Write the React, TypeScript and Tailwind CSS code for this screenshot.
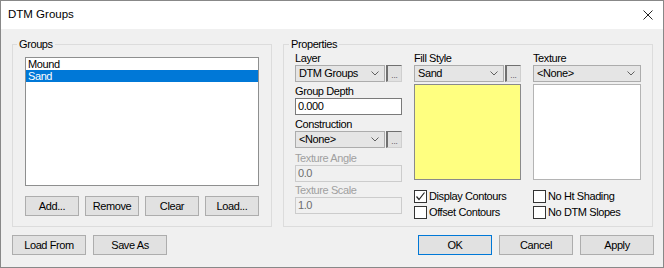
import React from "react"

const Chevron = () => (
  <svg width="8" height="5" viewBox="0 0 8 5" className="shrink-0">
    <polyline points="0.5,0.5 4,4 7.5,0.5" fill="none" stroke="#606060" strokeWidth="1" />
  </svg>
)

function Btn({ label, className = "", primary = false }: { label: string; className?: string; primary?: boolean }) {
  return (
    <div
      className={`h-[20px] flex items-center justify-center bg-[#e1e1e1] border ${
        primary ? "border-[#0078d7]" : "border-[#adadad]"
      } text-[11px] tracking-[-0.4px] text-black ${className}`}
    >
      {label}
    </div>
  )
}

function Combo({ value, className = "" }: { value: string; className?: string }) {
  return (
    <div
      className={`h-[17px] flex items-center justify-between bg-[#e5e5e5] border border-[#acacac] pl-[3px] pr-[5px] text-[11px] tracking-[-0.4px] text-black ${className}`}
    >
      <span className="leading-none">{value}</span>
      <Chevron />
    </div>
  )
}

const Dots = () => (
  <div className="ml-[1px] w-[16px] h-[17px] flex items-end justify-center bg-[#e1e1e1] border-l-2 border-t border-l-[#707070] border-t-[#707070] border-r border-b border-r-[#cfcfcf] border-b-[#cfcfcf]">
    <span className="text-[8px] leading-[10px] text-[#333]">...</span>
  </div>
)

function Label({ text, disabled = false }: { text: string; disabled?: boolean }) {
  return (
    <div className={`h-[13px] leading-[13px] text-[11px] tracking-[-0.4px] ${disabled ? "text-[#a0a0a0]" : "text-black"}`}>
      {text}
    </div>
  )
}

function Check({ label, checked = false }: { label: string; checked?: boolean }) {
  return (
    <div className="flex items-center h-[13px]">
      <div className="w-[13px] h-[13px] bg-white border border-[#333] flex items-center justify-center shrink-0">
        {checked && (
          <svg width="11" height="11" viewBox="0 0 11 11">
            <polyline points="1.5,5.5 4,8.5 9.5,1.5" fill="none" stroke="#222" strokeWidth="1.2" />
          </svg>
        )}
      </div>
      <span className="ml-[2px] text-[11px] tracking-[-0.4px] leading-[13px] text-black whitespace-nowrap">{label}</span>
    </div>
  )
}

export default function App() {
  const groups = ["Mound", "Sand"]
  const selected = "Sand"

  return (
    <div className="w-[664px] h-[268px] border border-[#888] bg-[#f0f0f0] flex flex-col font-['Liberation_Sans',Arial,sans-serif] overflow-hidden">
      {/* title bar */}
      <div className="h-[28px] shrink-0 bg-white flex items-center justify-between pl-[7px] pr-[10px]">
        <span className="text-[11.5px] text-black">DTM Groups</span>
        <svg width="10" height="10" viewBox="0 0 10 10">
          <path d="M0.5 0.5 L9.5 9.5 M9.5 0.5 L0.5 9.5" stroke="#222" strokeWidth="1" />
        </svg>
      </div>

      <div className="flex-1 flex flex-col pt-[9px] pl-[11px] pr-[9px]">
        <div className="flex gap-[11px]">
          {/* Groups */}
          <fieldset className="w-[260px] h-[189px] border border-[#dcdcdc] p-0 m-0">
            <legend className="ml-[4px] px-[2px] h-[13px] leading-[13px] text-[11px] tracking-[-0.4px] text-black">Groups</legend>
            <div className="pl-[12px] pt-[6px]">
              <div className="w-[234px] h-[129px] bg-white border border-[#8e8f8f] flex flex-col">
                {groups.map((g) => (
                  <div
                    key={g}
                    className={`h-[12px] leading-[12px] pl-[2px] text-[11px] tracking-[-0.4px] ${
                      g === selected ? "bg-[#0078d7] text-white" : "text-black"
                    }`}
                  >
                    {g}
                  </div>
                ))}
              </div>
              <div className="mt-[10px] flex gap-[6px]">
                <Btn label="Add..." className="w-[54px]" />
                <Btn label="Remove" className="w-[54px]" />
                <Btn label="Clear" className="w-[54px]" />
                <Btn label="Load..." className="w-[54px]" />
              </div>
            </div>
          </fieldset>

          {/* Properties */}
          <fieldset className="w-[370px] h-[189px] border border-[#dcdcdc] p-0 m-0">
            <legend className="ml-[5px] px-[2px] h-[13px] leading-[13px] text-[11px] tracking-[-0.4px] text-black">Properties</legend>
            <div className="pl-[11px] pt-[1px] flex gap-[12px] items-start">
              <div className="w-[107px] flex flex-col">
                <Label text="Layer" />
                <div className="flex">
                  <Combo value="DTM Groups" className="w-[90px]" />
                  <Dots />
                </div>
                <div className="mt-[3px]">
                  <Label text="Group Depth" />
                </div>
                <div className="h-[17px] bg-white border border-[#7a7a7a] pl-[2px] flex items-center text-[11px] tracking-[-0.4px] text-black">
                  0.000
                </div>
                <div className="mt-[3px]">
                  <Label text="Construction" />
                </div>
                <div className="flex">
                  <Combo value="<None>" className="w-[90px]" />
                  <Dots />
                </div>
                <div className="mt-[4px]">
                  <Label text="Texture Angle" disabled />
                </div>
                <div className="h-[17px] bg-[#f0f0f0] border border-[#cccccc] pl-[2px] flex items-center text-[11px] tracking-[-0.4px] text-[#6d6d6d]">
                  0.0
                </div>
                <div className="mt-[2px]">
                  <Label text="Texture Scale" disabled />
                </div>
                <div className="h-[17px] bg-[#f0f0f0] border border-[#cccccc] pl-[2px] flex items-center text-[11px] tracking-[-0.4px] text-[#6d6d6d]">
                  1.0
                </div>
              </div>

              <div className="w-[107px] flex flex-col">
                <Label text="Fill Style" />
                <div className="flex">
                  <Combo value="Sand" className="w-[90px]" />
                  <Dots />
                </div>
                <div className="mt-[2px] h-[96px] bg-[#ffff80] border border-[#8a8a8a]" />
                <div className="mt-[10px] flex flex-col gap-[3px]">
                  <Check label="Display Contours" checked />
                  <Check label="Offset Contours" />
                </div>
              </div>

              <div className="w-[108px] flex flex-col">
                <Label text="Texture" />
                <Combo value="<None>" className="w-[108px]" />
                <div className="mt-[2px] h-[96px] bg-white border border-[#b4b4b4]" />
                <div className="mt-[10px] flex flex-col gap-[3px]">
                  <Check label="No Ht Shading" />
                  <Check label="No DTM Slopes" />
                </div>
              </div>
            </div>
          </fieldset>
        </div>

        <div className="mt-[8px] flex justify-between">
          <div className="flex gap-[7px]">
            <Btn label="Load From" className="w-[74px]" />
            <Btn label="Save As" className="w-[74px]" />
          </div>
          <div className="flex gap-[7px]">
            <Btn label="OK" primary className="w-[74px]" />
            <Btn label="Cancel" className="w-[74px]" />
            <Btn label="Apply" className="w-[74px]" />
          </div>
        </div>
      </div>
    </div>
  )
}
